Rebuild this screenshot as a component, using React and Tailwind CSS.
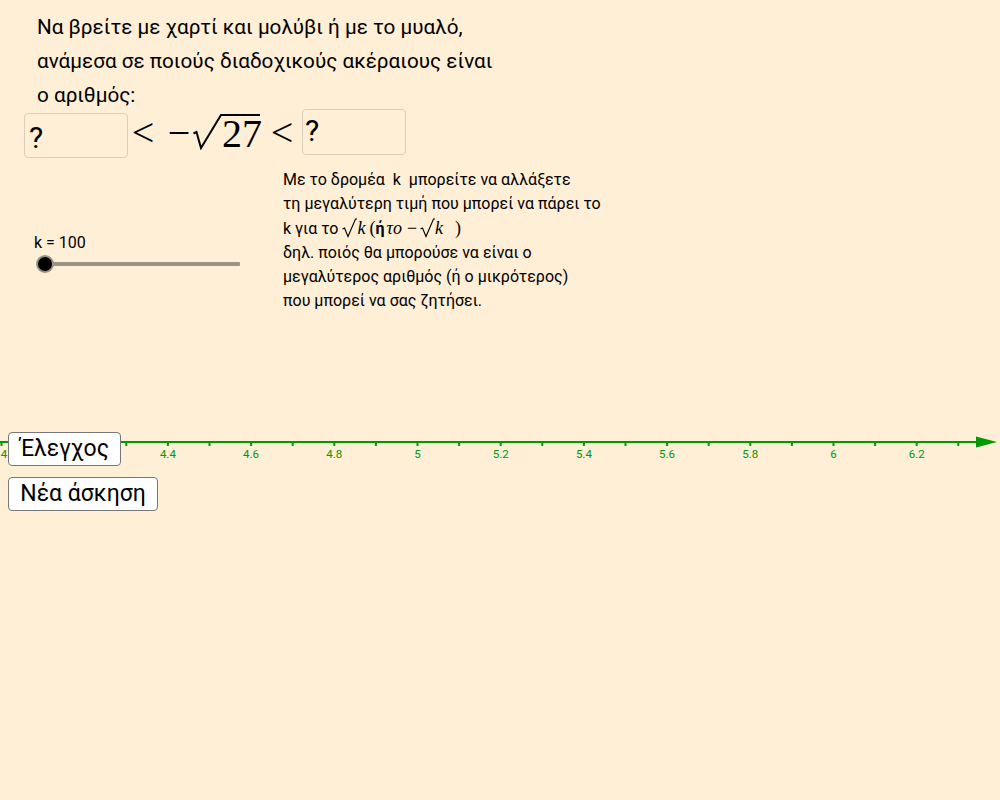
import React from "react";

const GREEN = "#009900";

function SmallRadical() {
  return (
    <svg width="15" height="20" viewBox="0 0 15 20" className="inline-block align-[-4px]">
      <path d="M0.5 11 L2.5 10 L6 18.5 L13.5 1 L15 1" fill="none" stroke="black" strokeWidth="1.1" />
    </svg>
  );
}

function Axis() {
  const ticks = [];
  for (let n = 0; n < 24; n++) ticks.push(1.5 + n * 41.6);
  const labels = [];
  for (let n = 0; n <= 22; n += 2) {
    if (n === 2) continue;
    const v = (4 + n * 0.1).toFixed(1).replace(/\.0$/, "");
    labels.push([n === 0 ? 4 : 1.5 + n * 41.6, v]);
  }
  return (
    <svg className="absolute left-0 top-0" width="1000" height="60" viewBox="0 0 1000 60">
      <line x1="0" y1="17" x2="980" y2="17" stroke={GREEN} strokeWidth="2" />
      <polygon points="976,11.5 997,17 976,22.5" fill={GREEN} />
      {ticks.map((x, i) => (
        <line key={i} x1={x} y1="17" x2={x} y2="21" stroke={GREEN} strokeWidth="2" />
      ))}
      {labels.map(([x, t], i) => (
        <text key={i} x={x} y="33" textAnchor="middle" fill={GREEN} fontSize="11.5" fontFamily="Roboto, sans-serif">
          {t}
        </text>
      ))}
    </svg>
  );
}

export default function App() {
  return (
    <div className="w-[1000px] h-[800px] bg-[#FFEFD6] text-black overflow-hidden" style={{ fontFamily: "Roboto, 'Noto Sans', sans-serif" }}>
      {/* title */}
      <div className="h-[109px] pt-[10px] pl-[37px] text-[20.7px] leading-[34px]">
        <div>Να βρείτε με χαρτί και μολύβι ή με το μυαλό,</div>
        <div>ανάμεσα σε ποιούς διαδοχικούς ακέραιους είναι</div>
        <div>ο αριθμός:</div>
      </div>

      {/* inequality row */}
      <div className="flex items-start h-[49px]">
        <div className="ml-[24px] mt-[4px] w-[104px] h-[45px] border border-[#d9cfbd] rounded-[4px] pl-[4px] pt-[7px] text-[30px] leading-[34px]">?</div>
        <div className="flex items-start" style={{ fontFamily: "'Liberation Serif', serif" }}>
          <span className="ml-[2px] mt-[4px] w-[26px] text-[40px] leading-[40px] text-center">&lt;</span>
          <span className="ml-[11px] mt-[4px] w-[24px] text-[40px] leading-[40px] text-center">−</span>
          <svg width="29" height="36" viewBox="0 0 29 36" className="ml-[2px] mt-[5px]">
            <path d="M0.5 19.5 L3.5 18 L8 34 L28 1 L29 1" fill="none" stroke="black" strokeWidth="2" strokeLinejoin="miter" />
          </svg>
          <span className="mt-[5px] w-[38px] border-t-2 border-black text-[40px] leading-[35px] text-center">27</span>
          <span className="ml-[9px] mt-[4px] w-[26px] text-[40px] leading-[40px] text-center">&lt;</span>
        </div>
        <div className="ml-[7px] w-[104px] h-[46px] border border-[#d9cfbd] rounded-[4px] pl-[2px] pt-[4px] text-[30px] leading-[34px]">?</div>
      </div>

      {/* slider + explanation */}
      <div className="flex h-[267px]">
        <div className="w-[283px] shrink-0">
          <div className="mt-[77px] pl-[34px] text-[16px] leading-[16px]">k = 100</div>
          <div className="relative ml-[36px] w-[206px] h-[26px] flex items-center">
            <div className="ml-[2px] w-[202px] h-[4px] bg-[#9b9383] rounded-[1px]" />
            <div className="absolute left-0 top-[4px] w-[18px] h-[18px] rounded-full bg-[#9a9282] flex items-center justify-center">
              <div className="w-[14px] h-[14px] rounded-full bg-black" />
            </div>
          </div>
        </div>
        <div className="mt-[10px] text-[16px] leading-[24px]">
          <div>Με το δρομέα&nbsp; k&nbsp; μπορείτε να αλλάξετε</div>
          <div>τη μεγαλύτερη τιμή που μπορεί να πάρει το</div>
          <div className="h-[25px]">
            k για το{" "}
            <span style={{ fontFamily: "'Liberation Serif', serif" }} className="text-[18px]">
              <SmallRadical />
              <i>k</i>
              <span className="ml-[4px]">(</span>
              <b style={{ fontFamily: "Roboto, sans-serif" }} className="text-[16px]">ή</b>
              <i className="ml-[2px]">τo</i>
              <span className="ml-[5px] mr-[3px]">−</span>
              <SmallRadical />
              <i>k</i>
              <span className="ml-[12px]">)</span>
            </span>
          </div>
          <div>δηλ. ποιός θα μπορούσε να είναι ο</div>
          <div>μεγαλύτερος αριθμός (ή ο μικρότερος)</div>
          <div>που μπορεί να σας ζητήσει.</div>
        </div>
      </div>

      {/* number line + buttons */}
      <div className="relative h-[100px]">
        <Axis />
        <div className="relative flex flex-col items-start gap-[11px] pt-[7px] pl-[8px]">
          <button className="w-[113px] h-[34px] bg-white border border-[#777] rounded-[4px] text-[23px] leading-[32px] text-center">Έλεγχος</button>
          <button className="w-[150px] h-[34px] bg-white border border-[#777] rounded-[4px] text-[23px] leading-[32px] text-center">Νέα άσκηση</button>
        </div>
      </div>
    </div>
  );
}
